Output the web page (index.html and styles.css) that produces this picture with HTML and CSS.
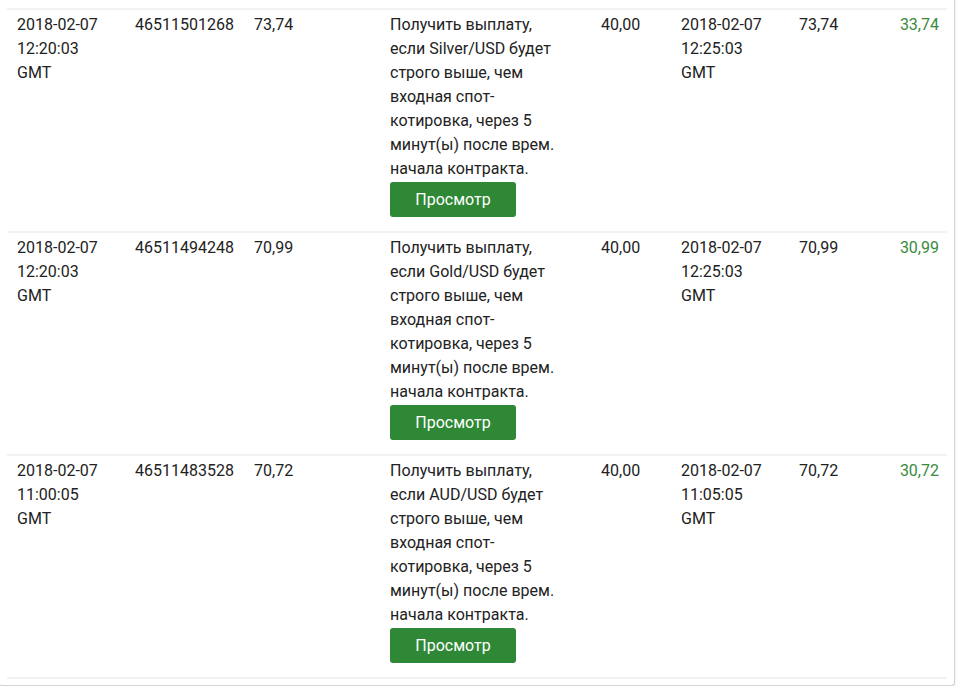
FILE: index.html
```html
<!DOCTYPE html>
<html lang="ru">
<head>
    <meta charset="UTF-8">
    <meta name="viewport" content="width=device-width, initial-scale=1.0">
    <title>Статистика контрактов</title>
    <link rel="stylesheet" href="styles.css">
</head>
<body>
    <div class="card">
        <table class="statement">
            <colgroup>
                <col class="c-date">
                <col class="c-ref">
                <col class="c-price">
                <col class="c-desc">
                <col class="c-stake">
                <col class="c-date2">
                <col class="c-sell">
                <col class="c-profit">
            </colgroup>
            <tbody>
                <tr>
                    <td>2018-02-07<br>12:20:03<br>GMT</td>
                    <td>46511501268</td>
                    <td>73,74</td>
                    <td>
                        <div class="desc">Получить выплату, если Silver/USD будет строго выше, чем входная спот-котировка, через 5 минут(ы) после врем. начала контракта.</div>
                        <button class="view-button">Просмотр</button>
                    </td>
                    <td>40,00</td>
                    <td>2018-02-07<br>12:25:03<br>GMT</td>
                    <td>73,74</td>
                    <td class="profit">33,74</td>
                </tr>
                <tr>
                    <td>2018-02-07<br>12:20:03<br>GMT</td>
                    <td>46511494248</td>
                    <td>70,99</td>
                    <td>
                        <div class="desc">Получить выплату, если Gold/USD будет строго выше, чем входная спот-котировка, через 5 минут(ы) после врем. начала контракта.</div>
                        <button class="view-button">Просмотр</button>
                    </td>
                    <td>40,00</td>
                    <td>2018-02-07<br>12:25:03<br>GMT</td>
                    <td>70,99</td>
                    <td class="profit">30,99</td>
                </tr>
                <tr>
                    <td>2018-02-07<br>11:00:05<br>GMT</td>
                    <td>46511483528</td>
                    <td>70,72</td>
                    <td>
                        <div class="desc">Получить выплату, если AUD/USD будет строго выше, чем входная спот-котировка, через 5 минут(ы) после врем. начала контракта.</div>
                        <button class="view-button">Просмотр</button>
                    </td>
                    <td>40,00</td>
                    <td>2018-02-07<br>11:05:05<br>GMT</td>
                    <td>70,72</td>
                    <td class="profit">30,72</td>
                </tr>
            </tbody>
        </table>
    </div>
</body>
</html>
```

FILE: styles.css
```css
body {
    margin: 0;
    background: #fff;
    font-family: Roboto, "Liberation Sans", Arial, sans-serif;
    font-size: 16px;
    line-height: 24px;
    color: #222;
}

.card {
    margin: -12px 3px 0 -2px;
    padding: 19px 8px 6px 8px;
    background: #fff;
    border: 1px solid #d4d4d4;
    border-radius: 4px;
    box-shadow: 0 1px 2px rgba(0, 0, 0, 0.15);
}

.statement {
    width: 940px;
    border-collapse: collapse;
    table-layout: fixed;
    border-bottom: 2px solid #f2f2f2;
}

.c-date { width: 118px; }
.c-ref { width: 119px; }
.c-price { width: 136px; }
.c-desc { width: 211px; }
.c-stake { width: 80px; }
.c-date2 { width: 118px; }
.c-sell { width: 80px; }
.c-profit { width: 78px; }

.statement td {
    vertical-align: top;
    text-align: left;
    padding: 3px 10px 14px 10px;
    border-top: 2px solid #f2f2f2;
}

.statement td.profit {
    text-align: right;
    padding-right: 8px;
    color: #3a8a3e;
}

.desc {
    width: 180px;
}

.view-button {
    display: block;
    width: 126px;
    height: 35px;
    margin-top: 1px;
    padding: 0;
    border: none;
    border-radius: 3px;
    background: #2e8836;
    color: #fff;
    font-family: Roboto, "Liberation Sans", Arial, sans-serif;
    font-size: 16px;
    cursor: pointer;
}
```
